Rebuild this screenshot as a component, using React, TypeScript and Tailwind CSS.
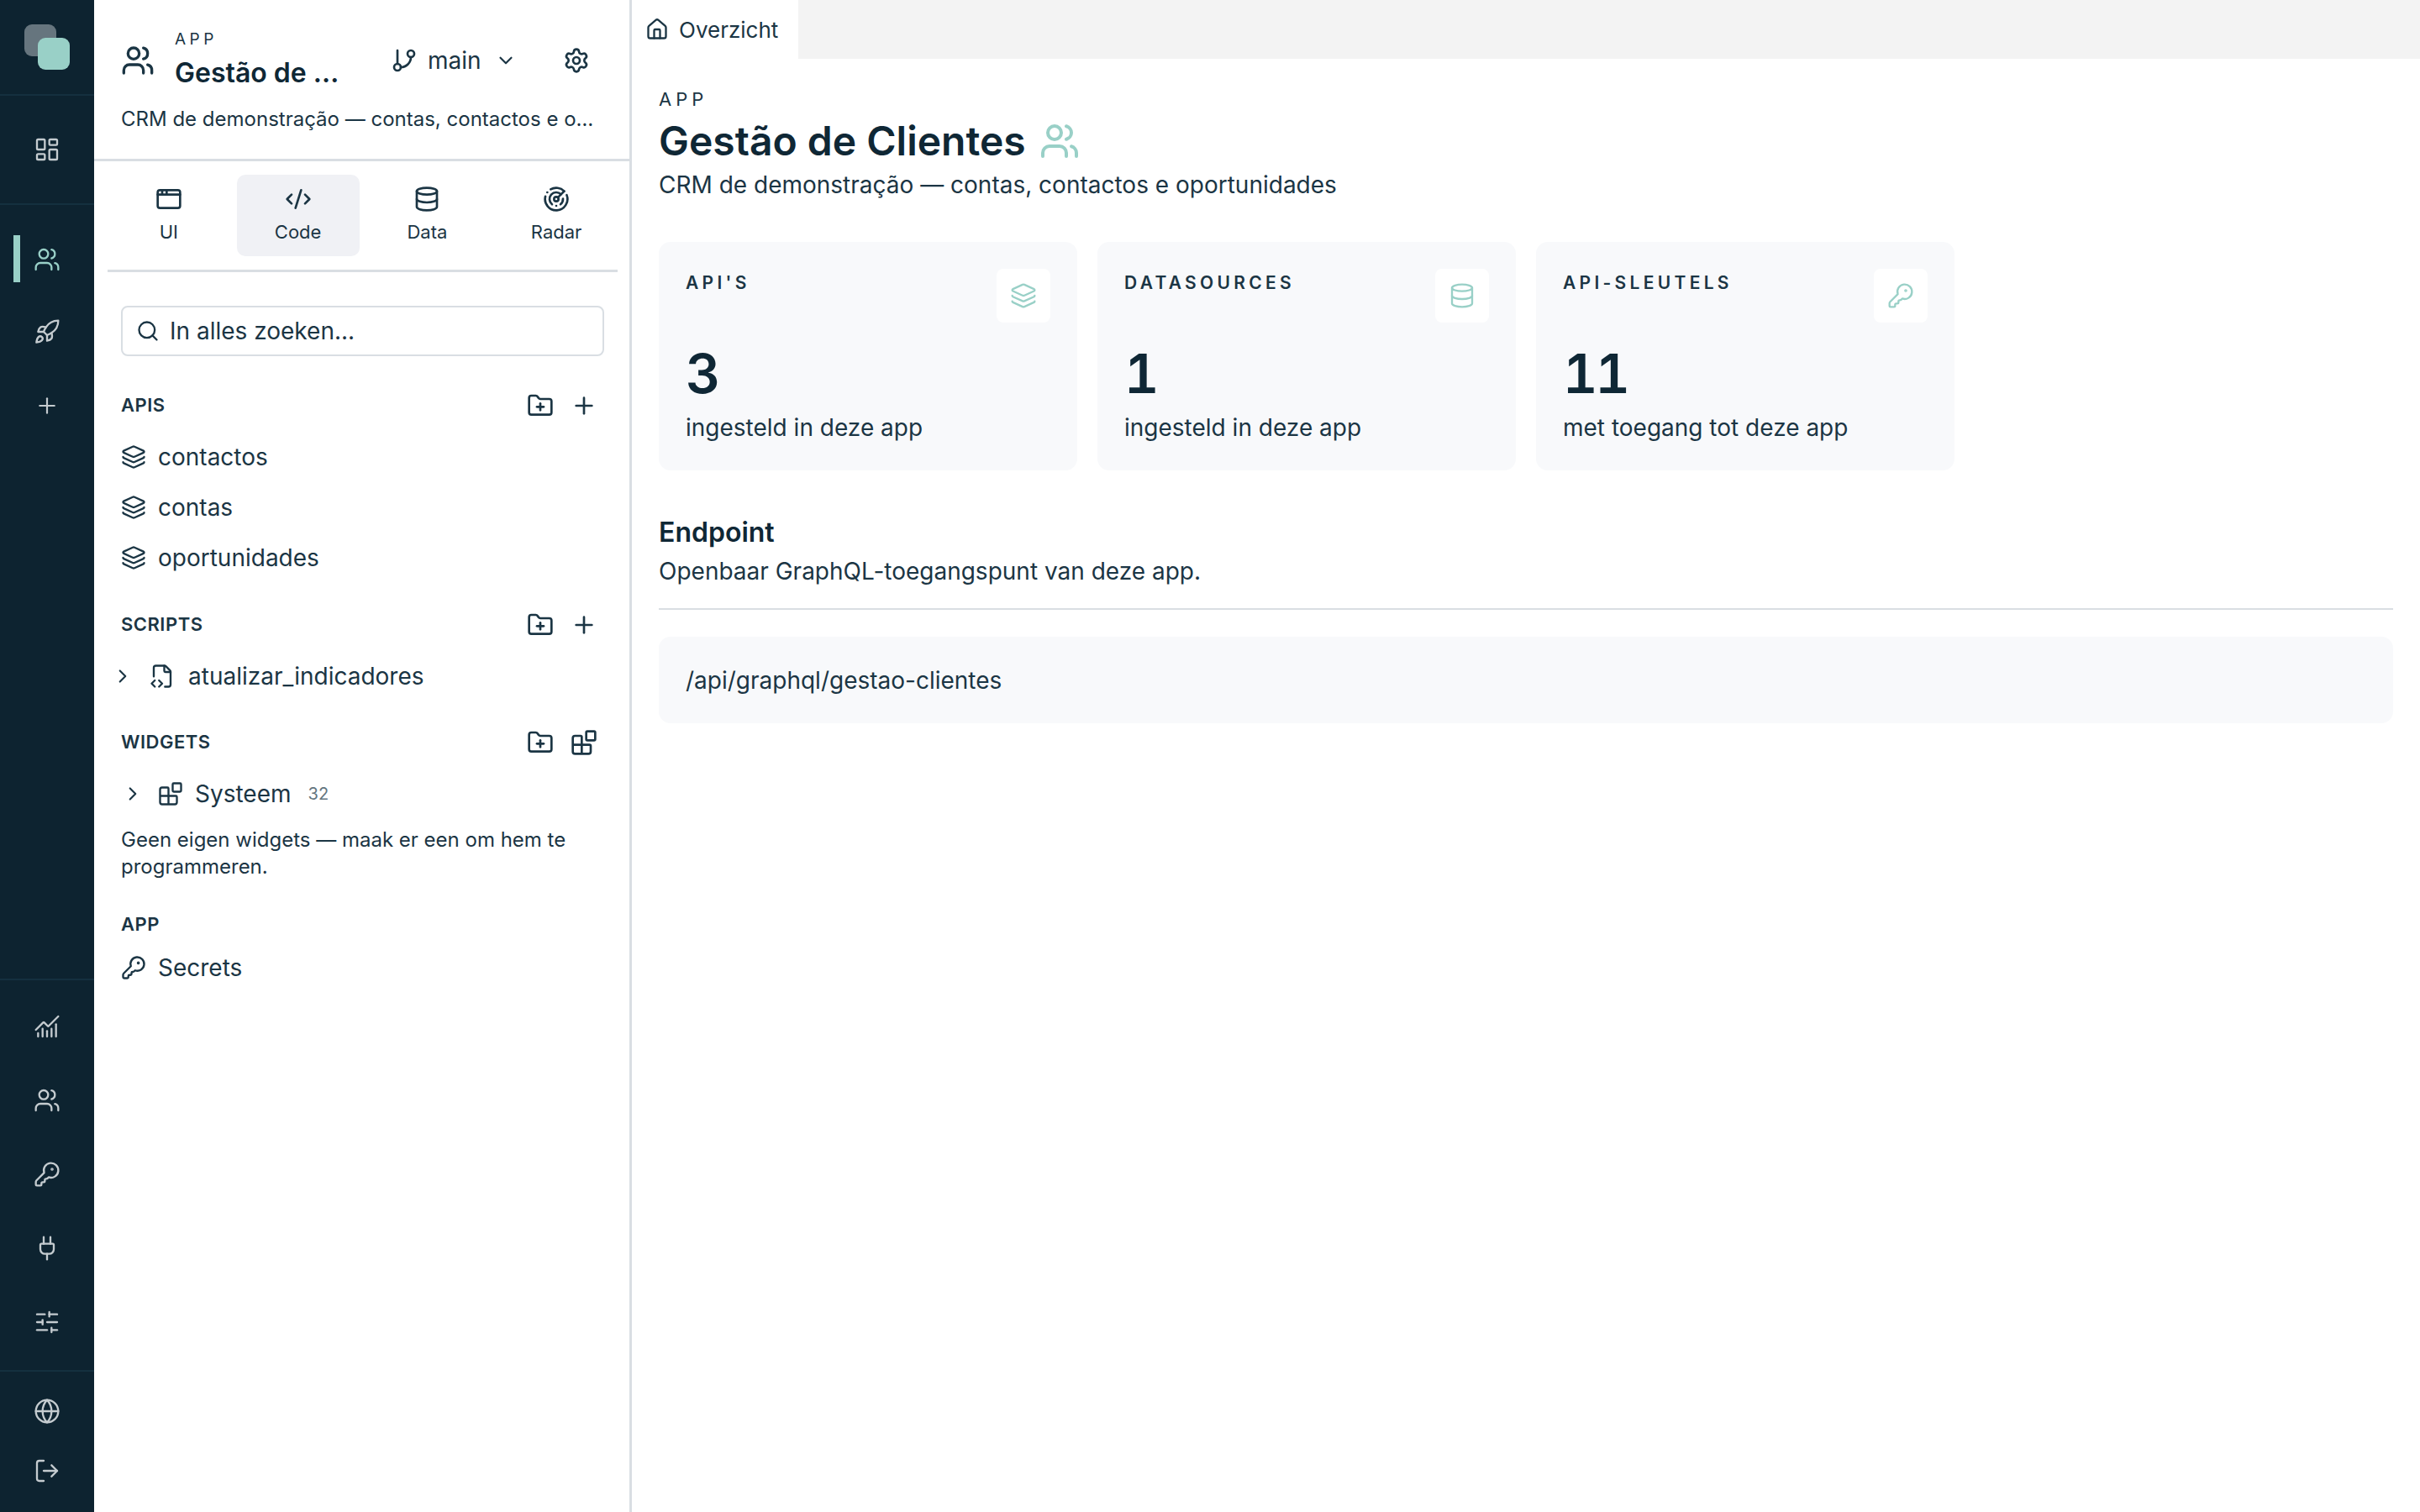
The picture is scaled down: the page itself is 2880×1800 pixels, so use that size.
import {
  AppWindow,
  Blocks,
  ChartNoAxesCombined,
  ChevronDown,
  ChevronRight,
  CodeXml,
  Database,
  FileCode2,
  FolderPlus,
  GitBranch,
  Globe,
  House,
  KeyRound,
  Layers,
  LayoutDashboard,
  LogOut,
  Plug,
  Plus,
  Radar,
  Rocket,
  Search,
  Settings,
  SlidersHorizontal,
  Users,
} from "lucide-react";

const railBottom = [
  { icon: ChartNoAxesCombined },
  { icon: Users },
  { icon: KeyRound },
  { icon: Plug },
  { icon: SlidersHorizontal },
];

const tabs = [
  { label: "UI", icon: AppWindow },
  { label: "Code", icon: CodeXml, active: true },
  { label: "Data", icon: Database },
  { label: "Radar", icon: Radar },
];

const stats = [
  { title: "API'S", value: "3", note: "ingesteld in deze app", icon: Layers },
  { title: "DATASOURCES", value: "1", note: "ingesteld in deze app", icon: Database },
  { title: "API-SLEUTELS", value: "11", note: "met toegang tot deze app", icon: KeyRound },
];

function SectionHeader({ title, blocks }: { title: string; blocks?: boolean }) {
  return (
    <div className="flex h-[32px] items-center justify-between pr-[6px]">
      <span className="text-[22px] font-semibold tracking-[0.5px]">{title}</span>
      <div className="flex items-center gap-[20px] pt-[2px]">
        <FolderPlus size={32} strokeWidth={2} />
        {blocks ? <Blocks size={32} strokeWidth={2} /> : <Plus size={32} strokeWidth={2} />}
      </div>
    </div>
  );
}

function Row({ label, icon: Icon }: { label: string; icon: typeof Layers }) {
  return (
    <div className="flex h-[60px] items-center gap-[14px]">
      <Icon size={30} strokeWidth={1.9} />
      <span className="text-[28px]">{label}</span>
    </div>
  );
}

export default function App() {
  return (
    <div className="flex h-[1800px] w-[2880px] overflow-hidden bg-white font-['Inter',sans-serif] text-[#1b3544]">
      <aside className="flex w-[112px] shrink-0 flex-col bg-[#0d2330] text-[#c4cbcf]">
        <div className="relative h-[114px] shrink-0 border-b-2 border-[#14303f]">
          <div className="absolute left-[29px] top-[29px] h-[38px] w-[38px] rounded-[9px] bg-[#66757e]" />
          <div className="absolute left-[45px] top-[45px] h-[38px] w-[38px] rounded-[9px] bg-[#99d0c7]" />
        </div>
        <div className="flex h-[130px] shrink-0 items-center justify-center border-b-2 border-[#14303f]">
          <LayoutDashboard size={32} strokeWidth={1.75} />
        </div>
        <div className="flex flex-1 flex-col items-center gap-[22px] pt-[33px]">
          <div className="relative flex h-[64px] w-full items-center justify-center text-[#99d0c7]">
            <div className="absolute left-[16px] top-[3px] h-[56px] w-[8px] bg-[#99d0c7]" />
            <Users size={32} strokeWidth={1.75} />
          </div>
          <div className="flex h-[64px] items-center justify-center">
            <Rocket size={32} strokeWidth={1.75} />
          </div>
          <div className="flex h-[68px] items-center justify-center">
            <Plus size={30} strokeWidth={1.75} />
          </div>
        </div>
        <div className="flex h-[466px] shrink-0 flex-col items-center gap-[48px] border-t-2 border-[#14303f] pt-[35px]">
          {railBottom.map(({ icon: Icon }, i) => (
            <div key={i} className="flex h-[40px] items-center justify-center">
              <Icon size={32} strokeWidth={1.75} />
            </div>
          ))}
        </div>
        <div className="flex h-[169px] shrink-0 flex-col items-center gap-[39px] border-t-2 border-[#14303f] pt-[31px]">
          <Globe size={32} strokeWidth={1.75} />
          <LogOut size={32} strokeWidth={1.75} />
        </div>
      </aside>

      <section className="flex w-[640px] shrink-0 flex-col border-r-[3px] border-[#d9dee3]">
        <header className="h-[192px] shrink-0 border-b-[3px] border-[#d9dee3] px-[32px]">
          <div className="flex h-[124px] items-center pt-[20px]">
            <Users size={40} strokeWidth={2} className="shrink-0" />
            <div className="ml-[24px] w-[200px] shrink-0">
              <div className="text-[19px] leading-[24px] tracking-[4.5px]">APP</div>
              <div className="mt-[6px] truncate text-[32px] font-semibold leading-[44px] text-[#0f2735]">Gestão de Clientes</div>
            </div>
            <div className="ml-[57px] flex items-center gap-[12px]">
              <GitBranch size={32} strokeWidth={2} />
              <span className="text-[28px]">main</span>
              <ChevronDown size={26} strokeWidth={2} className="ml-[4px]" />
            </div>
            <Settings size={32} strokeWidth={2} className="ml-[55px]" />
          </div>
          <p className="truncate text-[24px] leading-[36px]">CRM de demonstração — contas, contactos e oportunidades</p>
        </header>

        <nav className="ml-[16px] mr-[14px] mt-[16px] grid h-[116px] shrink-0 grid-cols-4 gap-[8px] border-b-[3px] border-[#d9dee3] pb-[16px]">
          {tabs.map(({ label, icon: Icon, active }) => (
            <div
              key={label}
              className={
                active
                  ? "flex flex-col items-center justify-center gap-[9px] rounded-[10px] bg-[#f0f1f5] pb-[3px]"
                  : "flex flex-col items-center justify-center gap-[9px] pb-[3px]"
              }
            >
              <Icon size={32} strokeWidth={2} />
              <span className="text-[22px] leading-[28px]">{label}</span>
            </div>
          ))}
        </nav>

        <div className="px-[32px] pt-[40px]">
          <div className="-mr-[2px] flex h-[60px] items-center gap-[12px] rounded-[8px] border-2 border-[#d9dee3] px-[16px]">
            <Search size={28} strokeWidth={2} />
            <span className="text-[28px]">In alles zoeken...</span>
          </div>

          <div className="mt-[42px]">
            <SectionHeader title="APIS" />
            <div className="mt-[16px]">
              <Row label="contactos" icon={Layers} />
              <Row label="contas" icon={Layers} />
              <Row label="oportunidades" icon={Layers} />
            </div>
          </div>

          <div className="mt-[33px]">
            <SectionHeader title="SCRIPTS" />
            <div className="mt-[16px] flex h-[60px] items-center">
              <ChevronRight size={26} strokeWidth={2} className="-ml-[11px]" />
              <FileCode2 size={30} strokeWidth={1.9} className="ml-[19px]" />
              <span className="ml-[16px] text-[28px]">atualizar_indicadores</span>
            </div>
          </div>

          <div className="mt-[32px]">
            <SectionHeader title="WIDGETS" blocks />
            <div className="mt-[16px] flex h-[60px] items-center">
              <ChevronRight size={26} strokeWidth={2} className="ml-[1px]" />
              <Blocks size={30} strokeWidth={1.9} className="ml-[17px]" />
              <span className="ml-[14px] text-[28px]">Systeem</span>
              <span className="ml-[20px] text-[20px] text-[#64757f]">32</span>
            </div>
            <p className="mt-[9px] text-[24px] leading-[32px]">Geen eigen widgets — maak er een om hem te programmeren.</p>
          </div>

          <div className="mt-[36px]">
            <div className="text-[22px] font-semibold leading-[32px] tracking-[0.5px]">APP</div>
            <div className="mt-[6px]">
              <Row label="Secrets" icon={KeyRound} />
            </div>
          </div>
        </div>
      </section>

      <main className="flex flex-1 flex-col">
        <div className="flex h-[70px] shrink-0 bg-[#f3f3f3]">
          <div className="flex w-[198px] items-center gap-[12px] bg-white pl-[16px]">
            <House size={28} strokeWidth={2} />
            <span className="text-[26px]">Overzicht</span>
          </div>
        </div>

        <div className="px-[32px] pt-[34px]">
          <div className="text-[22px] leading-[28px] tracking-[5px]">APP</div>
          <div className="mt-[6px] flex h-[60px] items-center gap-[16px]">
            <h1 className="text-[48px] font-semibold text-[#0f2735]">Gestão de Clientes</h1>
            <Users size={48} strokeWidth={2} className="text-[#99d0c7]" />
          </div>
          <p className="text-[28px] leading-[44px]">CRM de demonstração — contas, contactos e oportunidades</p>

          <div className="mt-[46px] flex gap-[24px]">
            {stats.map(({ title, value, note, icon: Icon }) => (
              <div key={title} className="flex h-[272px] w-[498px] flex-col rounded-[14px] bg-[#f8f9fb] p-[32px]">
                <div className="flex items-start justify-between">
                  <span className="pt-[1px] text-[21px] font-semibold tracking-[4.3px]">{title}</span>
                  <div className="flex h-[64px] w-[64px] items-center justify-center rounded-[8px] bg-white text-[#99d0c7]">
                    <Icon size={32} strokeWidth={1.75} />
                  </div>
                </div>
                <div className="mt-[29px] text-[64px] font-semibold leading-[64px] tracking-[-3px] tabular-nums text-[#0f2735]">{value}</div>
                <div className="mt-[10px] text-[28px] leading-[44px]">{note}</div>
              </div>
            ))}
          </div>

          <h2 className="mt-[52px] text-[32px] font-semibold leading-[44px] text-[#0f2735]">Endpoint</h2>
          <p className="mt-[2px] text-[28px] leading-[44px]">Openbaar GraphQL-toegangspunt van deze app.</p>
          <div className="mt-[22px] border-t-2 border-[#d9dee3]" />
          <div className="mt-[32px] flex h-[103px] items-center rounded-[14px] bg-[#f8f9fb] px-[32px] text-[28px]">
            /api/graphql/gestao-clientes
          </div>
        </div>
      </main>
    </div>
  );
}
